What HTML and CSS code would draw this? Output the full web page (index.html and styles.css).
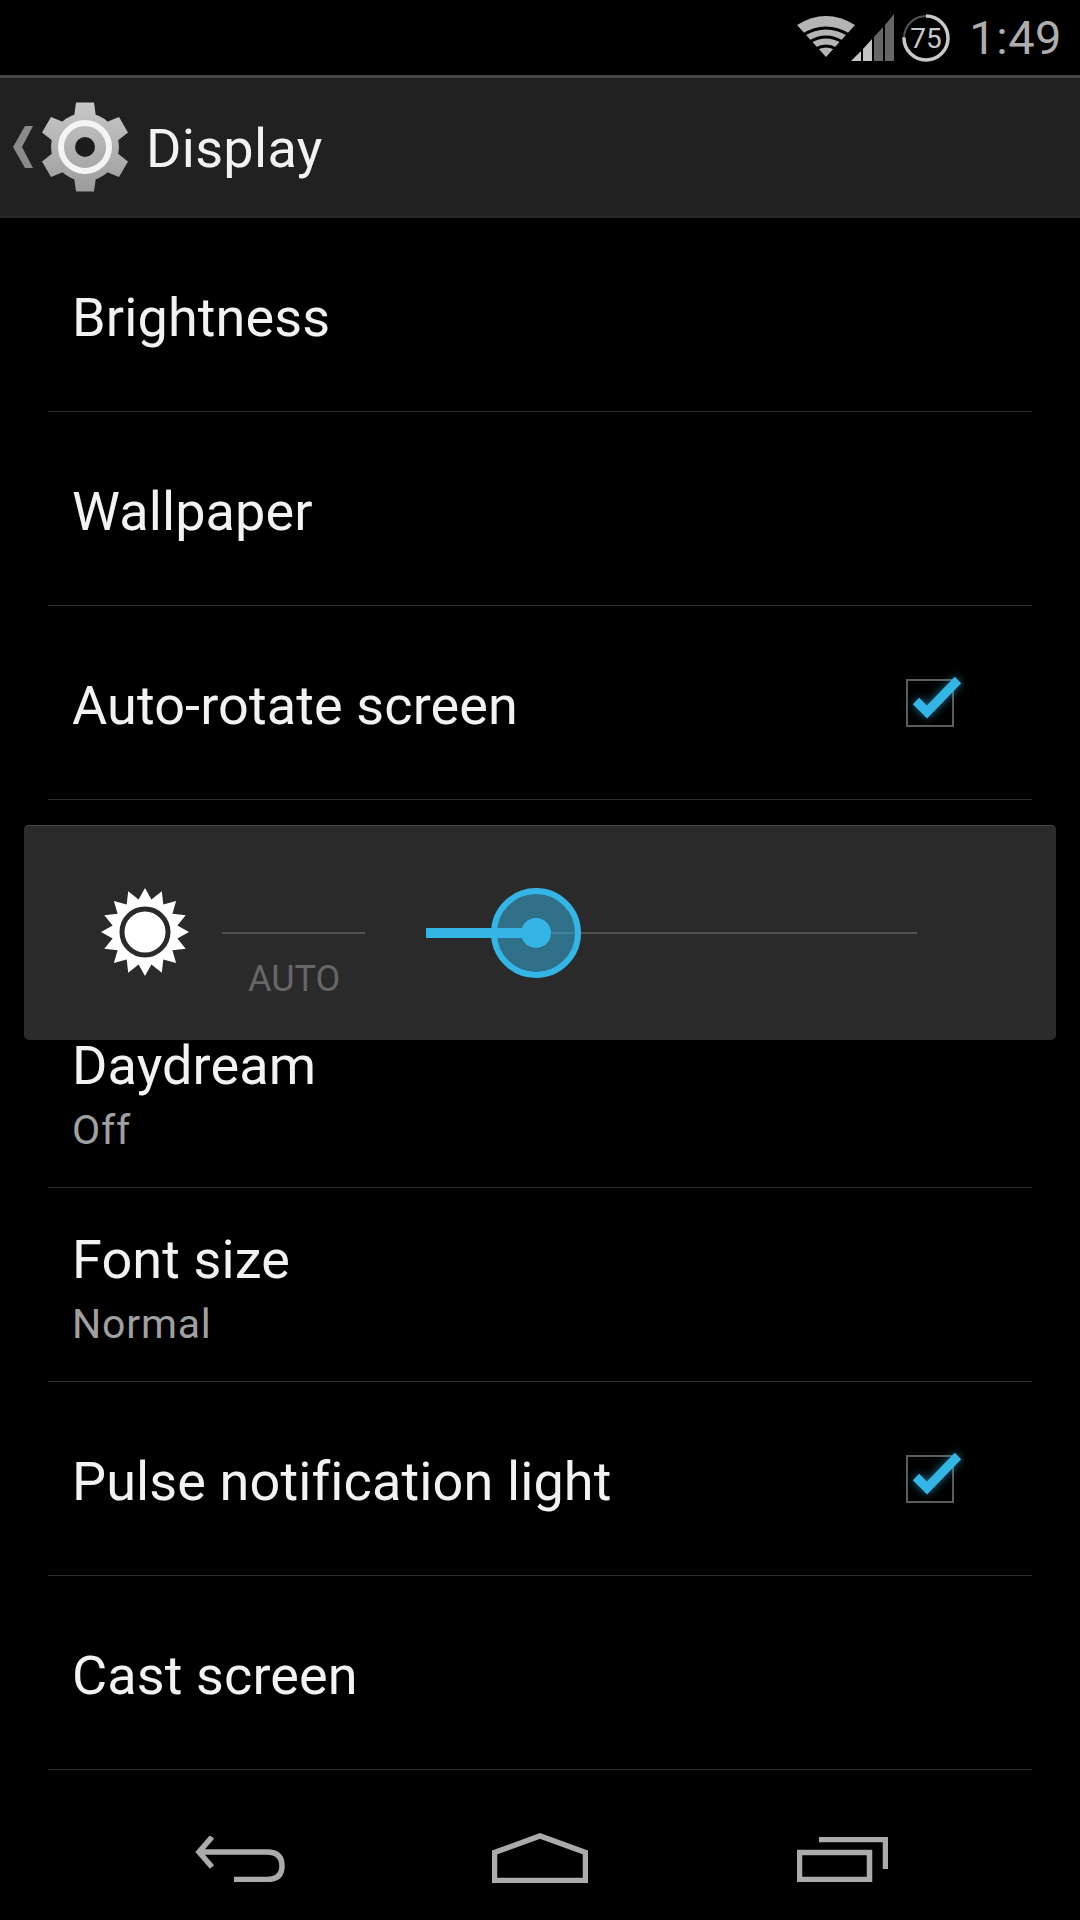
FILE: index.html
```html
<!DOCTYPE html>
<html lang="en">
<head>
    <meta charset="UTF-8">
    <meta name="viewport" content="width=device-width, initial-scale=1.0">
    <title>Display</title>
    <link rel="stylesheet" href="styles.css">
</head>
<body>
    <div class="screen">
        <!-- Status bar -->
        <div class="status-bar">
            <svg class="icon-wifi" width="58" height="42" viewBox="0 0 58 42">
                <path d="M29 41 L0 9 Q29 -9 58 9 Z" fill="#b4b4b4"/>
                <path d="M6 19 Q29 5 52 19 M12.400 26 Q29 16 45.600 26 M18.700 33 Q29 27 39.300 33" fill="none" stroke="#000" stroke-width="3"/>
            </svg>
            <svg class="icon-signal" width="44" height="48" viewBox="0 0 44 48">
                <path d="M0 48 L10 48 L10 38 Z" fill="#c4c4c4"/>
                <path d="M12 48 L12 36 L21 26 L21 48 Z" fill="#c4c4c4"/>
                <path d="M23 48 L23 24 L32 14 L32 48 Z" fill="#666"/>
                <path d="M34 48 L34 12 L43 1 L43 48 Z" fill="#666"/>
            </svg>
            <svg class="icon-battery" width="50" height="50" viewBox="0 0 50 50">
                <circle cx="25" cy="25" r="22" fill="none" stroke="#555" stroke-width="2"/>
                <circle cx="25" cy="25" r="22" fill="none" stroke="#c8c8c8" stroke-width="3.500" stroke-dasharray="103.700 34.500" transform="rotate(-90 25 25)"/>
                <text x="25" y="35" class="battery-text">75</text>
            </svg>
            <span class="clock">1:49</span>
        </div>

        <!-- Action bar -->
        <div class="action-bar">
            <svg class="icon-back" width="22" height="44" viewBox="0 0 22 44">
                <path d="M21 1 L13 1 L1 22 L13 43 L21 43 L10 22 Z" fill="#8a8a8a"/>
            </svg>
            <svg class="icon-gear" width="90" height="90" viewBox="-45 -45 90 90">
                <defs>
                    <linearGradient id="gear-fill" gradientUnits="userSpaceOnUse" x1="0" y1="-45" x2="0" y2="45">
                        <stop offset="0" stop-color="#c8c8c8"/>
                        <stop offset="1" stop-color="#9c9c9c"/>
                    </linearGradient>
                </defs>
                <path fill="url(#gear-fill)" d="M-11 -30 L-9 -44.500 H9 L11 -30 L20.500 -24.500 L34 -30 L43 -14.400 L31.500 -5.500 V5.500 L43 14.400 L34 30 L20.500 24.500 L11 30 L9 44.500 H-9 L-11 30 L-20.500 24.500 L-34 30 L-43 14.400 L-31.500 5.500 V-5.500 L-43 -14.400 L-34 -30 L-20.500 -24.500 Z"/>
                <circle r="34" fill="url(#gear-fill)"/>
                <circle r="24" fill="url(#gear-fill)" stroke="#f4f4f4" stroke-width="6"/>
                <circle r="10" fill="#1c1c1c"/>
            </svg>
            <span class="action-title">Display</span>
        </div>

        <!-- Settings list -->
        <div class="list">
            <div class="row"><span class="row-title">Brightness</span></div>
            <div class="row"><span class="row-title">Wallpaper</span></div>
            <div class="row">
                <span class="row-title">Auto-rotate screen</span>
                <svg class="check" width="60" height="60" viewBox="0 0 60 60">
                    <defs>
                        <filter id="glow" x="-50%" y="-50%" width="200%" height="200%">
                            <feGaussianBlur stdDeviation="5"/>
                        </filter>
                    </defs>
                    <rect x="2" y="10" width="46" height="46" fill="none" stroke="#5c5c5c" stroke-width="2"/>
                    <path d="M11 31 L22 42 L53 10" fill="none" stroke="#33b5e5" stroke-width="9" filter="url(#glow)" opacity="0.6"/>
                    <path d="M11 31 L22 42 L53 10" fill="none" stroke="#33b5e5" stroke-width="9"/>
                </svg>
            </div>
            <div class="row"></div>
            <div class="row">
                <div class="row-text">
                    <div class="row-title">Daydream</div>
                    <div class="row-sub">Off</div>
                </div>
            </div>
            <div class="row">
                <div class="row-text">
                    <div class="row-title">Font size</div>
                    <div class="row-sub">Normal</div>
                </div>
            </div>
            <div class="row">
                <span class="row-title">Pulse notification light</span>
                <svg class="check" width="60" height="60" viewBox="0 0 60 60">
                    <rect x="2" y="10" width="46" height="46" fill="none" stroke="#5c5c5c" stroke-width="2"/>
                    <path d="M11 31 L22 42 L53 10" fill="none" stroke="#33b5e5" stroke-width="9" filter="url(#glow)" opacity="0.6"/>
                    <path d="M11 31 L22 42 L53 10" fill="none" stroke="#33b5e5" stroke-width="9"/>
                </svg>
            </div>
            <div class="row"><span class="row-title">Cast screen</span></div>
        </div>

        <!-- Navigation bar -->
        <div class="nav-bar">
            <svg width="90" height="46" viewBox="0 0 90 46">
                <path d="M39 43.500 H72 Q87 43.500 87 30 Q87 16 72 16 H4 M17 1 L4 16 L17 31" fill="none" stroke="#ababab" stroke-width="5.500"/>
            </svg>
            <svg class="nav-home" width="96" height="50" viewBox="0 0 96 50">
                <path d="M2.500 47.500 V19.500 L48 3 L93.500 19.500 V47.500 Z" fill="none" stroke="#ababab" stroke-width="5.500"/>
            </svg>
            <svg width="91" height="45" viewBox="0 0 91 45">
                <rect x="2.500" y="15.500" width="70" height="27" fill="none" stroke="#ababab" stroke-width="5.500"/>
                <path d="M22 2.500 H88.500 V32" fill="none" stroke="#ababab" stroke-width="5.500"/>
            </svg>
        </div>

        <!-- Brightness dialog -->
        <div class="dialog">
            <svg class="sun" width="88" height="88" viewBox="-44 -44 88 88">
                <polygon id="sun-rays" fill="#fff" points=""/>
                <circle r="23" fill="#fff" stroke="#2a2a2a" stroke-width="5"/>
            </svg>
            <div class="auto">
                <div class="auto-line"></div>
                <span class="auto-label">AUTO</span>
            </div>
            <div class="slider">
                <div class="slider-fill"></div>
                <div class="slider-thumb"><div class="slider-dot"></div></div>
            </div>
        </div>
    </div>

    <script>
        // Sun rays: 16 points around the disc
        const rays = [];
        for (let i = 0; i < 32; i++) {
            const r = i % 2 === 0 ? 44 : 33;
            const a = i * Math.PI / 16 - Math.PI / 2;
            rays.push((r * Math.cos(a)).toFixed(1) + ',' + (r * Math.sin(a)).toFixed(1));
        }
        document.getElementById('sun-rays').setAttribute('points', rays.join(' '));
    </script>
</body>
</html>
```

FILE: styles.css
```css
* {
    margin: 0;
    padding: 0;
    box-sizing: border-box;
    font-family: 'Roboto', sans-serif;
}

body {
    background-color: #000;
    color: #f2f2f2;
}

.screen {
    position: relative;
    width: 1080px;
    height: 1920px;
    overflow: hidden;
    display: flex;
    flex-direction: column;
}

/* Status bar */
.status-bar {
    height: 75px;
    display: flex;
    align-items: center;
    justify-content: flex-end;
    padding-right: 18px;
}

.icon-wifi {
    margin-top: -2px;
}

.icon-signal {
    margin-left: -4px;
    margin-top: -2px;
}

.icon-battery {
    margin-left: 6px;
}

.battery-text {
    fill: #c8c8c8;
    font-size: 28px;
    text-anchor: middle;
}

.clock {
    margin-left: 18px;
    font-size: 47px;
    letter-spacing: 0.5px;
    color: #adadad;
}

/* Action bar */
.action-bar {
    height: 143px;
    background-color: #212121;
    border-top: 3px solid #464646;
    border-bottom: 2px solid #272727;
    display: flex;
    align-items: center;
    padding-left: 12px;
}

.icon-gear {
    margin-left: 6px;
}

.action-title {
    margin-left: 16px;
    margin-top: 2px;
    font-size: 54px;
    letter-spacing: 0.3px;
    color: #f2f2f2;
}

/* List rows */
.list {
    padding: 0 48px;
}

.row {
    height: 194px;
    border-bottom: 1px solid #2e2e2e;
    display: flex;
    align-items: center;
    justify-content: space-between;
    padding: 6px 67px 0 24px;
}

.row-text {
    padding-top: 3px;
}

.row-title {
    font-size: 54px;
    letter-spacing: 0.12px;
    line-height: 64px;
}

.row-sub {
    margin-top: 6px;
    font-size: 41px;
    letter-spacing: 0.8px;
    color: #a0a0a0;
    line-height: 52px;
}

.check {
    margin-top: -12px;
}

/* Navigation bar */
.nav-bar {
    flex: 1;
    display: flex;
    align-items: center;
    justify-content: space-between;
    padding: 28px 192px 0 195px;
}

.nav-home {
    margin-right: 3px;
    margin-top: -3px;
}

/* Brightness dialog */
.dialog {
    position: absolute;
    left: 24px;
    top: 825px;
    width: 1032px;
    height: 215px;
    background-color: #2a2a2a;
    border-top: 1px solid #484848;
    border-radius: 5px;
    display: flex;
    align-items: center;
    padding-left: 77px;
}

.sun {
    flex: none;
    margin-top: -2px;
}

.auto {
    position: relative;
    width: 143px;
    margin-left: 33px;
    height: 2px;
    margin-top: -1px;
}

.auto-line {
    height: 2px;
    background-color: #505050;
}

.auto-label {
    position: absolute;
    left: 26px;
    top: 26px;
    font-size: 36px;
    color: #666;
}

.slider {
    position: relative;
    width: 491px;
    height: 2px;
    margin-left: 61px;
    margin-top: -1px;
    background-color: #505050;
}

.slider-fill {
    position: absolute;
    left: 0;
    top: -4px;
    width: 109px;
    height: 10px;
    background-color: #33b5e5;
}

.slider-thumb {
    position: absolute;
    left: 65px;
    top: -44px;
    width: 90px;
    height: 90px;
    border: 6px solid #33b5e5;
    border-radius: 50%;
    background-color: rgba(51, 181, 229, 0.5);
    display: flex;
    align-items: center;
    justify-content: center;
}

.slider-dot {
    width: 30px;
    height: 30px;
    border-radius: 50%;
    background-color: #33b5e5;
}
```
